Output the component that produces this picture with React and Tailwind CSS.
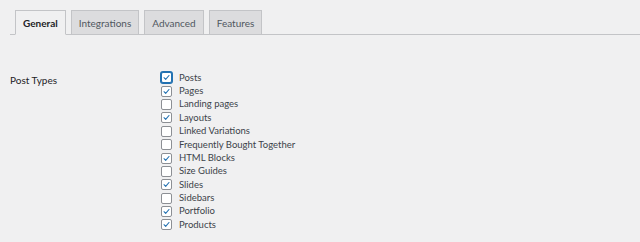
import React from 'react';

const tabs = ['General', 'Integrations', 'Advanced', 'Features'];

const postTypes = [
  { label: 'Posts', checked: true, focused: true },
  { label: 'Pages', checked: true },
  { label: 'Landing pages', checked: false },
  { label: 'Layouts', checked: true },
  { label: 'Linked Variations', checked: false },
  { label: 'Frequently Bought Together', checked: false },
  { label: 'HTML Blocks', checked: true },
  { label: 'Size Guides', checked: false },
  { label: 'Slides', checked: true },
  { label: 'Sidebars', checked: false },
  { label: 'Portfolio', checked: true },
  { label: 'Products', checked: true },
];

function Checkbox({ checked, focused }) {
  return (
    <span
      className={`flex h-[11px] w-[11px] shrink-0 items-center justify-center rounded-[2px] border bg-white ${
        focused ? 'border-[#2271b1] shadow-[0_0_0_1px_#2271b1]' : 'border-[#8c8f94]'
      }`}
    >
      {checked && (
        <svg viewBox="0 0 20 20" className="h-[11px] w-[11px]">
          <path
            d="M4.5 10.5 L8.2 14.2 L15.5 5.5"
            fill="none"
            stroke="#2271b1"
            strokeWidth="2.4"
            strokeLinecap="round"
            strokeLinejoin="round"
          />
        </svg>
      )}
    </span>
  );
}

export default function App() {
  return (
    <div
      className="h-[242px] w-[640px] overflow-hidden bg-[#f0f0f1] text-[#1d2327]"
      style={{ fontFamily: 'Lato, "Noto Sans", sans-serif' }}
    >
      <div className="ml-[10px] flex gap-[5px] border-b border-[#c3c4c7] pl-[5px] pt-[10px]">
        {tabs.map((tab, i) => (
          <div
            key={tab}
            className={`-mb-px flex h-[25px] items-center border px-[7px] pt-[1px] text-[10px] ${
              i === 0
                ? 'border-[#c3c4c7] border-b-[#f0f0f1] bg-[#f0f0f1] font-bold text-[#1d2327]'
                : 'border-[#c3c4c7] bg-[#dcdcde] text-[#50575e]'
            }`}
          >
            {tab}
          </div>
        ))}
      </div>

      <div className="flex pl-[10px] pt-[36px] text-[9.5px]">
        <div className="w-[151px] pt-[2px] text-[10px]">Post Types</div>
        <div className="flex flex-col">
          {postTypes.map((item) => (
            <label key={item.label} className="flex h-[13.4px] items-center gap-[7px] text-[#3c434a]">
              <Checkbox checked={item.checked} focused={item.focused} />
              <span>{item.label}</span>
            </label>
          ))}
        </div>
      </div>
    </div>
  );
}
